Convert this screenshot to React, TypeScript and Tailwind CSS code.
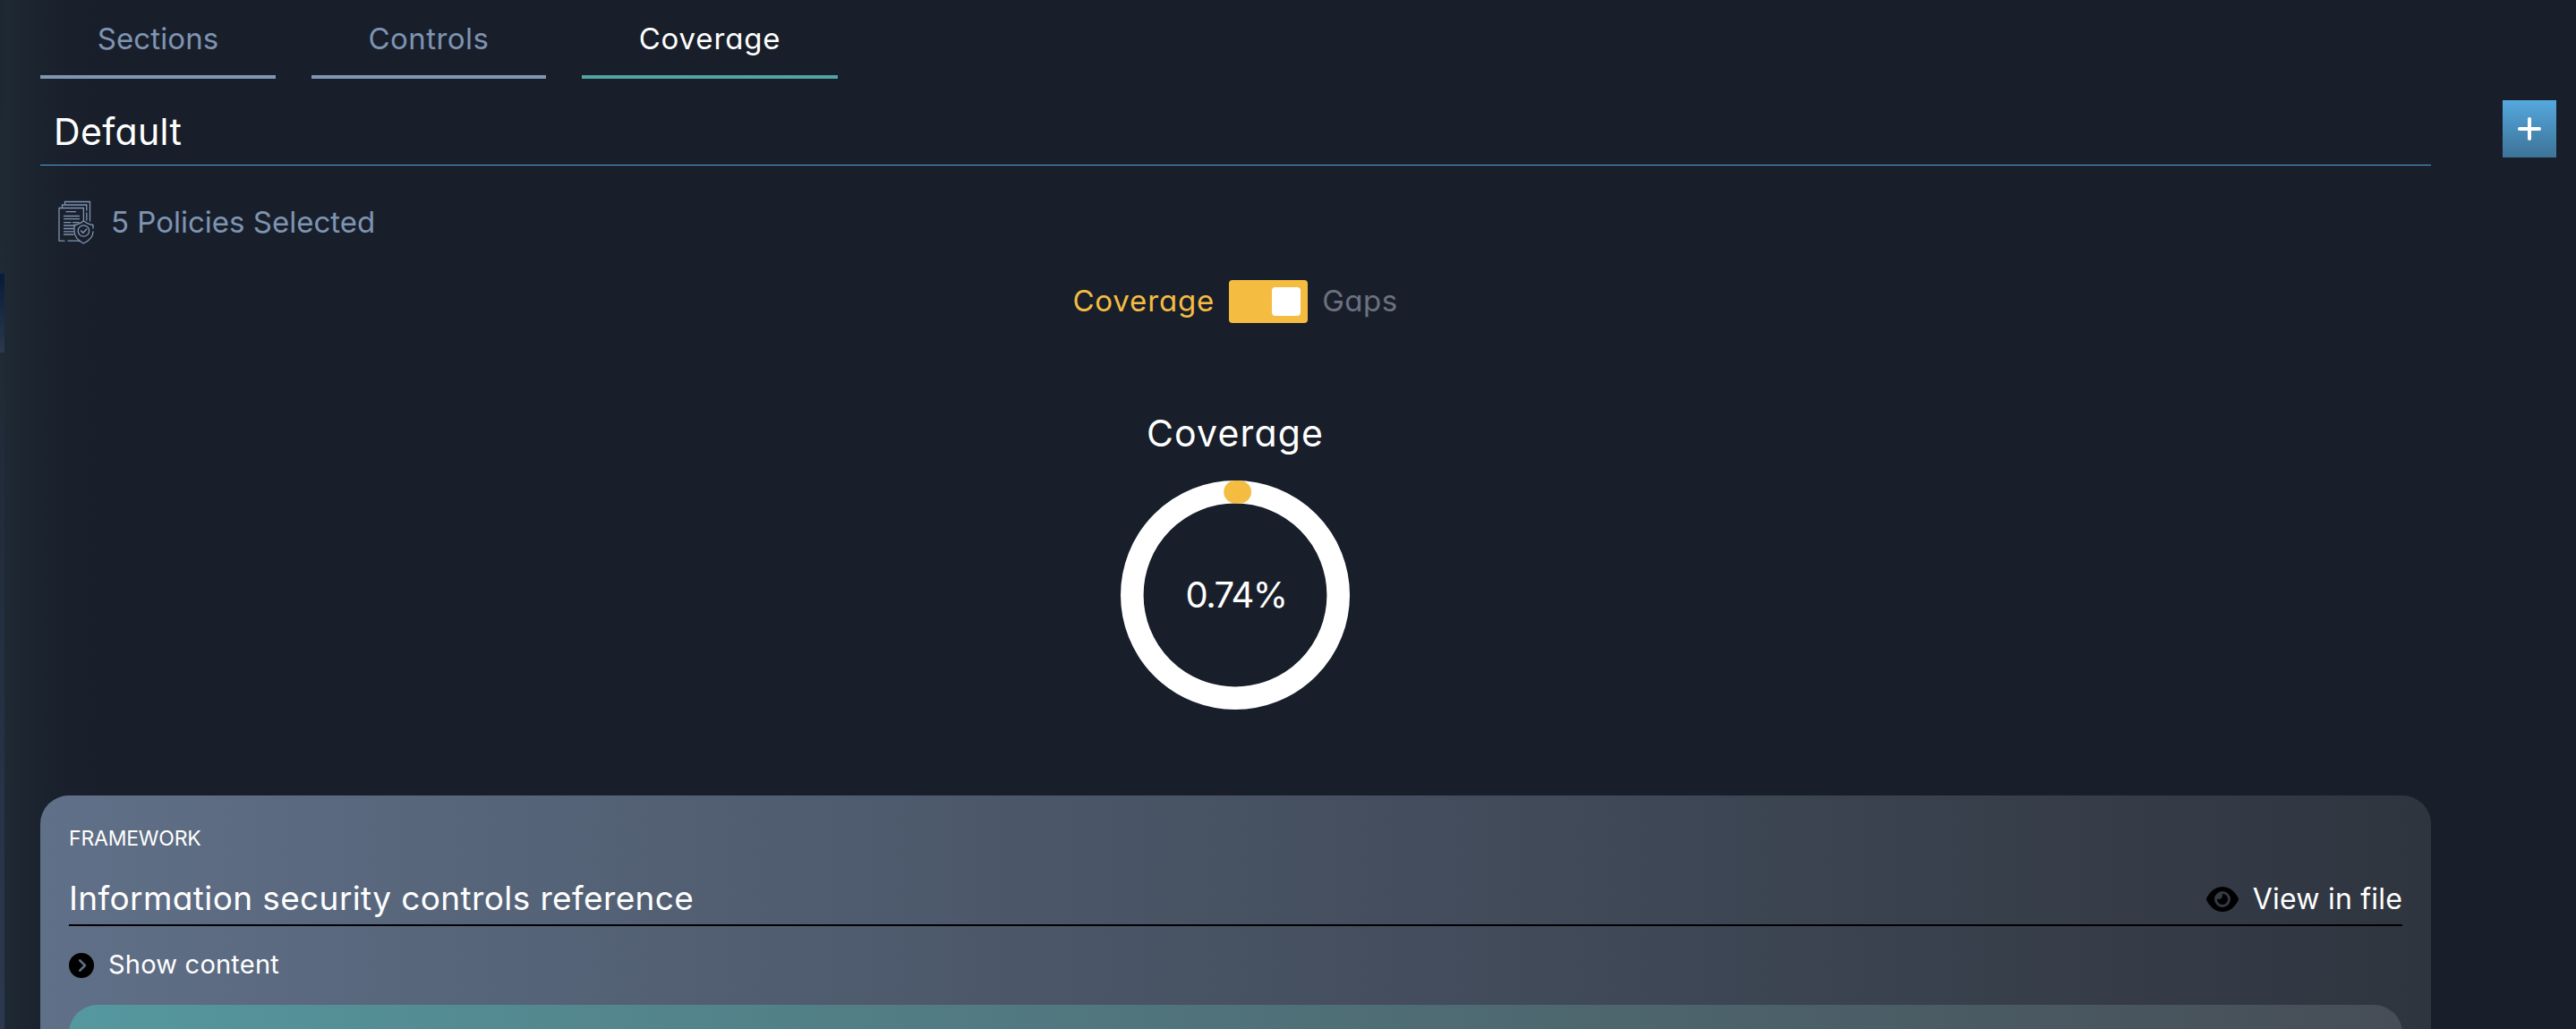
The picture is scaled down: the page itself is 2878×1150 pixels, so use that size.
import React from "react";
import { FaCircleChevronRight, FaEye } from "react-icons/fa6";

function PoliciesIcon() {
  return (
    <svg width="44" height="50" viewBox="0 0 44 50" fill="none" stroke="#7e94b3" strokeWidth="1.3" strokeLinecap="round">
      <path d="M8.5 4V1.5h28V23" />
      <path d="M5.5 8V5h27.3v6M32.8 14v8" />
      <path d="M8 45.2H2V8.5h27.4V22M12 45.2H25" />
      <path d="M10 12.7h10.5M7.5 17.5H24.5M7.5 20.7H24.5M7.5 24.6H15M17.5 24.6H24M7.5 28H20M7.5 31.5H18M7.5 34.8H18M7.5 38H18" />
      <path d="M40 31V27.5C36 27 32.5 25.5 29.4 22.7C26.3 25.5 23 27 19 27.5V34C19 40 23.5 45 29.4 48C35.5 45 40 40 40 35" />
      <circle cx="29.4" cy="34" r="6.2" />
      <path d="M26.6 34l2.2 2.2 3.8-4" strokeWidth="1.6" />
    </svg>
  );
}

function Tab({ label, className }: { label: string; className: string }) {
  return (
    <button className={`flex h-[88px] items-start justify-center border-b-4 pt-[19px] text-[33px] leading-[48px] ${className}`}>
      {label}
    </button>
  );
}

function CoverageRing({ percent }: { percent: number }) {
  const r = 115.2;
  const length = 2 * Math.PI * r;
  return (
    <div className="grid size-64 place-items-center">
      <svg className="col-start-1 row-start-1 size-64 -rotate-90" viewBox="0 0 256 256" fill="none" strokeWidth="25.6">
        <circle cx="128" cy="128" r={r} stroke="#fff" />
        <circle
          cx="128"
          cy="128"
          r={r}
          stroke="#f4bd42"
          strokeLinecap="round"
          strokeDasharray={`${(percent / 100) * length} ${length}`}
        />
      </svg>
      <span className="col-start-1 row-start-1 pl-0.5 text-[40px] leading-[60px] tracking-[-1.5px]">{percent}%</span>
    </div>
  );
}

export default function App() {
  return (
    <div className="flex h-[1150px] w-full overflow-hidden bg-[#191f2a] font-['Inter','Noto_Sans',sans-serif] text-white [font-feature-settings:'cv11']">
      <aside className="flex w-[5px] shrink-0 flex-col bg-linear-to-b from-[#1d2732] via-[#222c3a] to-[#2b3950]">
        <div className="mt-[306px] h-[88px] bg-linear-to-b from-[#071b3a] to-[#2b394a]" />
      </aside>

      <div className="flex min-w-0 flex-1 bg-linear-to-r from-[#1f2933] via-[#1a222d] via-[45px] to-[#191f2a] to-[100px] pl-10">
        <main className="flex w-[2671px] shrink-0 flex-col *:shrink-0">
          <nav className="flex gap-10">
            <Tab label="Sections" className="w-[263px] border-[#8095b3] tracking-[0.1px] text-[#7e94b3]" />
            <Tab label="Controls" className="w-[262px] border-[#8095b3] tracking-[0.45px] text-[#7e94b3]" />
            <Tab label="Coverage" className="w-[286px] border-[#52a3a1] tracking-[0.85px]" />
          </nav>

          <header className="h-[97px] border-b border-[#4fa5dc] pt-[29px] pl-[15px]">
            <h1 className="text-[41px] leading-[60px] tracking-[0.35px]">Default</h1>
          </header>

          <div className="mt-[39px] flex h-[50px] items-start pl-[19px] text-[#7e94b3]">
            <PoliciesIcon />
            <span className="ml-4 text-[33px] leading-[48px]">5 Policies Selected</span>
          </div>

          <div className="mt-[39px] flex h-12 items-center justify-center gap-4 pr-px text-[33px] leading-[48px]">
            <span className="-mt-[2px] tracking-[0.85px] text-[#f4bd42]">Coverage</span>
            <button className="flex h-12 w-[88px] items-center justify-end rounded bg-[#f4bd42] pr-2">
              <span className="size-8 rounded bg-white" />
            </button>
            <span className="-mt-[2px] tracking-[0.5px] text-[#6b7280]">Gaps</span>
          </div>

          <section className="mt-[93px] flex flex-col items-center pr-px">
            <h2 className="mb-[23px] text-[41px] leading-[60px] tracking-[1.15px]">Coverage</h2>
            <CoverageRing percent={0.74} />
          </section>

          <section className="mt-[96px] flex h-[300px] flex-col rounded-t-[32px] bg-linear-to-r from-[#607088] to-[#2f353f] px-8 pt-[30px] *:shrink-0">
            <p className="text-[23px] leading-9 tracking-[-0.2px]">FRAMEWORK</p>
            <div className="mt-[22px] flex h-[58px] items-start justify-between border-b-2 border-black">
              <h3 className="text-[37px] leading-[54px] tracking-[0.38px]">Information security controls reference</h3>
              <button className="flex items-center gap-4 pt-1 text-[32px] leading-[48px] tracking-[0.2px]">
                <FaEye className="size-9 text-black" />
                View in file
              </button>
            </div>
            <button className="mt-[22px] flex items-center gap-4 self-start text-[29px] leading-[42px] tracking-[0.22px]">
              <FaCircleChevronRight className="mt-0.5 size-7 text-black" />
              Show content
            </button>
            <div className="mt-6 h-40 rounded-t-[32px] bg-linear-to-r from-[#55989f] to-[#464d56]" />
          </section>
        </main>

        <aside className="ml-20 pt-28">
          <button className="flex h-16 w-[60px] items-center justify-center bg-linear-to-b from-[#55a8de] to-[#3d7398]">
            <svg width="26" height="26" viewBox="0 0 26 26" stroke="#fff" strokeWidth="4" strokeLinecap="round">
              <path d="M2 13h22M13 2v22" />
            </svg>
          </button>
        </aside>
      </div>
    </div>
  );
}
